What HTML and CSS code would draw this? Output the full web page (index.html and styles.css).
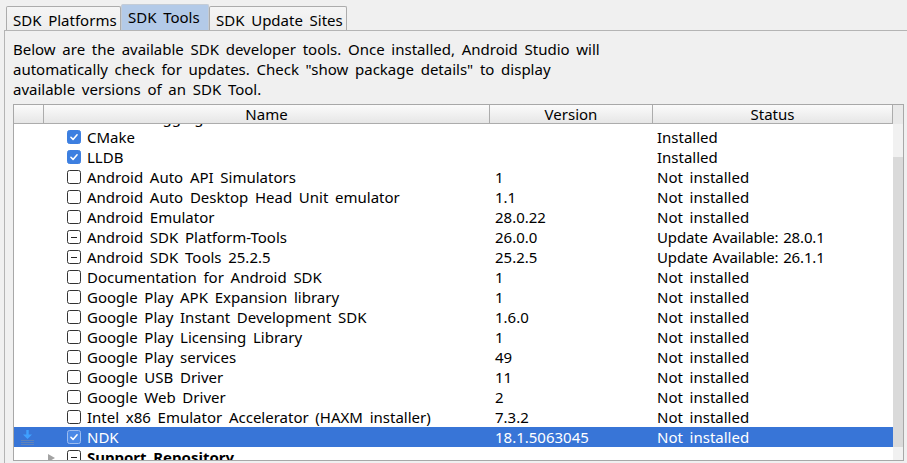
FILE: index.html
```html
<!DOCTYPE html>
<html>
<head>
<meta charset="utf-8">
<link rel="stylesheet" href="styles.css">
</head>
<body>
<div class="tabs">
  <div class="tab tab-platforms">SDK Platforms</div>
  <div class="tab tab-tools active">SDK Tools</div>
  <div class="tab tab-sites">SDK Update Sites</div>
</div>
<div class="panel">
  <p class="desc">Below are the available SDK developer tools. Once installed, Android Studio will<br>automatically check for updates. Check "show package details" to display<br>available versions of an SDK Tool.</p>
  <div class="table">
    <div class="thead">
      <div class="th th-icon"></div>
      <div class="th th-name">Name</div>
      <div class="th th-ver">Version</div>
      <div class="th th-status">Status</div>
      <div class="th-corner"></div>
    </div>
    <div class="tbody">
      <div class="rows">
        <div class="row first"><div class="c-icon"></div><div class="c-name"><span class="exp"></span><span class="cb"></span>GPU Debugging tools</div><div class="c-ver"></div><div class="c-status"></div></div>
        <div class="row"><div class="c-icon"></div><div class="c-name"><span class="exp"></span><span class="cb checked"><svg viewBox="0 0 14 14"><path d="M3.4 7.3 L5.9 9.8 L10.6 4.4"/></svg></span>CMake</div><div class="c-ver"></div><div class="c-status">Installed</div></div>
        <div class="row"><div class="c-icon"></div><div class="c-name"><span class="exp"></span><span class="cb checked"><svg viewBox="0 0 14 14"><path d="M3.4 7.3 L5.9 9.8 L10.6 4.4"/></svg></span>LLDB</div><div class="c-ver"></div><div class="c-status">Installed</div></div>
        <div class="row"><div class="c-icon"></div><div class="c-name"><span class="exp"></span><span class="cb"></span>Android Auto API Simulators</div><div class="c-ver">1</div><div class="c-status">Not installed</div></div>
        <div class="row"><div class="c-icon"></div><div class="c-name"><span class="exp"></span><span class="cb"></span>Android Auto Desktop Head Unit emulator</div><div class="c-ver">1.1</div><div class="c-status">Not installed</div></div>
        <div class="row"><div class="c-icon"></div><div class="c-name"><span class="exp"></span><span class="cb"></span>Android Emulator</div><div class="c-ver">28.0.22</div><div class="c-status">Not installed</div></div>
        <div class="row"><div class="c-icon"></div><div class="c-name"><span class="exp"></span><span class="cb partial"></span>Android SDK Platform-Tools</div><div class="c-ver">26.0.0</div><div class="c-status upd">Update Available: 28.0.1</div></div>
        <div class="row"><div class="c-icon"></div><div class="c-name"><span class="exp"></span><span class="cb partial"></span>Android SDK Tools 25.2.5</div><div class="c-ver">25.2.5</div><div class="c-status upd">Update Available: 26.1.1</div></div>
        <div class="row"><div class="c-icon"></div><div class="c-name"><span class="exp"></span><span class="cb"></span>Documentation for Android SDK</div><div class="c-ver">1</div><div class="c-status">Not installed</div></div>
        <div class="row"><div class="c-icon"></div><div class="c-name"><span class="exp"></span><span class="cb"></span>Google Play APK Expansion library</div><div class="c-ver">1</div><div class="c-status">Not installed</div></div>
        <div class="row"><div class="c-icon"></div><div class="c-name"><span class="exp"></span><span class="cb"></span>Google Play Instant Development SDK</div><div class="c-ver">1.6.0</div><div class="c-status">Not installed</div></div>
        <div class="row"><div class="c-icon"></div><div class="c-name"><span class="exp"></span><span class="cb"></span>Google Play Licensing Library</div><div class="c-ver">1</div><div class="c-status">Not installed</div></div>
        <div class="row"><div class="c-icon"></div><div class="c-name"><span class="exp"></span><span class="cb"></span>Google Play services</div><div class="c-ver">49</div><div class="c-status">Not installed</div></div>
        <div class="row"><div class="c-icon"></div><div class="c-name"><span class="exp"></span><span class="cb"></span>Google USB Driver</div><div class="c-ver">11</div><div class="c-status">Not installed</div></div>
        <div class="row"><div class="c-icon"></div><div class="c-name"><span class="exp"></span><span class="cb"></span>Google Web Driver</div><div class="c-ver">2</div><div class="c-status">Not installed</div></div>
        <div class="row"><div class="c-icon"></div><div class="c-name"><span class="exp"></span><span class="cb"></span>Intel x86 Emulator Accelerator (HAXM installer)</div><div class="c-ver">7.3.2</div><div class="c-status">Not installed</div></div>
        <div class="row selected"><div class="c-icon"><svg class="dl" viewBox="0 0 15 15"><path class="dl-arrow" d="M6.3 0 H8.7 V4.5 H12 L7.5 9 L3 4.5 H6.3 Z"/><path class="dl-lines" d="M1 10.5 H14 M1 12.5 H14 M1 14.5 H14"/></svg></div><div class="c-name"><span class="exp"></span><span class="cb checked"><svg viewBox="0 0 14 14"><path d="M3.4 7.3 L5.9 9.8 L10.6 4.4"/></svg></span>NDK</div><div class="c-ver">18.1.5063045</div><div class="c-status">Not installed</div></div>
        <div class="row"><div class="c-icon"></div><div class="c-name bold"><span class="exp"><span class="tri"></span></span><span class="cb partial"></span>Support Repository</div><div class="c-ver"></div><div class="c-status"></div></div>
      </div>
      <div class="scrollbar"><div class="sb-top"></div><div class="sb-thumb"></div></div>
    </div>
  </div>
</div>
</body>
</html>
```
FILE: styles.css
```css
* { box-sizing: border-box; }
html, body { margin: 0; padding: 0; }
body {
  width: 907px;
  height: 463px;
  overflow: hidden;
  background: #f0f0f0;
  font-family: "Noto Sans", "Open Sans", sans-serif;
  font-size: 15px;
  word-spacing: 2.8px;
  color: #000;
}
.tabs {
  display: flex;
  align-items: flex-end;
  height: 30px;
  padding-left: 6px;
}
.tab {
  height: 24px;
  border: 1px solid #acacac;
  border-bottom: none;
  background: linear-gradient(#f5f5f5, #ededed);
  line-height: 20px;
  padding-top: 3px;
  padding-left: 6px;
  white-space: nowrap;
  border-radius: 2px 2px 0 0;
}
.tab-platforms { width: 115px; }
.tab-tools { width: 88px; padding-left: 6px; }
.tab-sites { width: 138px; padding-left: 6px; }
.tab.active {
  height: 26px;
  padding-top: 2px;
  background: #b3cae8;
  border-color: #c4ccd6;
}
.panel {
  margin-left: 4px;
  border-left: 1px solid #b4b4b4;
  border-top: 1px solid #b4b4b4;
  padding: 8px 0 0 8px;
  height: 433px;
}
.desc {
  margin: 0;
  line-height: 20px;
  white-space: nowrap;
}
.table {
  margin-top: 5px;
  width: 891px;
  height: 357px;
  border: 1px solid #a8a8a8;
  background: #fff;
}
.thead {
  display: flex;
  height: 19px;
}
.th {
  height: 19px;
  line-height: 18px;
  text-align: center;
  background: linear-gradient(#fbfbfb, #e6e6e6);
  border-right: 1px solid #acacac;
  border-bottom: 1px solid #acacac;
}
.th-icon { width: 30px; }
.th-name { width: 446px; }
.th-ver { width: 163px; }
.th-status { width: 240px; }
.th-corner {
  width: 10px;
  height: 19px;
  background: #e9e9e9;
}
.tbody {
  display: flex;
  height: 336px;
}
.rows {
  width: 879px;
  height: 336px;
  overflow: hidden;
  background: #fff;
}
.row {
  display: grid;
  grid-template-columns: 30px 446px 163px 240px;
  height: 20px;
  line-height: 20px;
  white-space: nowrap;
}
.row.first { margin-top: -17px; }
.row.selected { background: #3875d7; color: #fff; }
.c-icon { padding-left: 6px; display: flex; align-items: center; }
.c-name { display: flex; align-items: center; padding-left: 4px; }
.c-name.bold { font-weight: bold; }
.c-ver { padding-left: 5px; }
.c-status { padding-left: 4px; }
.c-status.upd { word-spacing: 1px; letter-spacing: -0.15px; }
.exp {
  width: 19px;
  height: 20px;
  display: flex;
  align-items: center;
  flex: none;
}
.tri {
  width: 0;
  height: 0;
  border-left: 7px solid #a3a3a3;
  border-top: 4.5px solid transparent;
  border-bottom: 4.5px solid transparent;
  margin-top: 1px;
}
.cb {
  position: relative;
  flex: none;
  width: 14px;
  height: 14px;
  margin-right: 6px;
  border: 1px solid #333;
  border-radius: 2.5px;
  background: #fff;
}
.cb.checked {
  background: #3d7fe0;
  border-color: #3d7fe0;
}
.row.selected .cb.checked {
  border-color: #9dbdf0;
  background: #4a88e6;
}
.cb svg {
  display: block;
  width: 12px;
  height: 12px;
}
.cb svg path {
  fill: none;
  stroke: #fff;
  stroke-width: 1.8;
  stroke-linecap: round;
  stroke-linejoin: round;
}
.cb.partial::after {
  content: "";
  position: absolute;
  left: 3px;
  top: 5.5px;
  width: 6px;
  height: 1.5px;
  background: #222;
}
.dl { width: 15px; height: 15px; display: block; }
.dl-arrow { fill: #3fa0ff; }
.dl-lines { stroke: #5f82b8; stroke-width: 1; fill: none; }
.scrollbar {
  width: 10px;
  height: 336px;
  background: #f1f1f1;
  display: flex;
  flex-direction: column;
}
.sb-top { height: 33px; }
.sb-thumb { height: 290px; background: #dadada; }
```
